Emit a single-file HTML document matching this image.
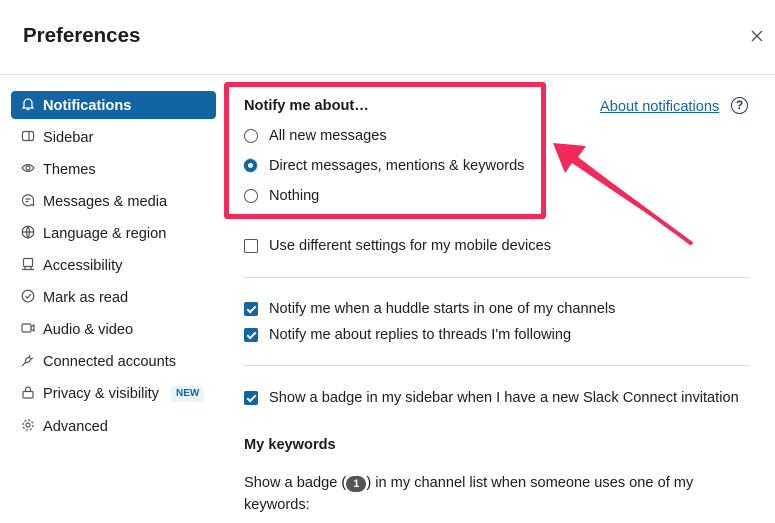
<!DOCTYPE html>
<html><head><style>
body{margin:0;width:775px;height:523px;background:#fff;font-family:"Liberation Sans",sans-serif;color:#1d1c1d;position:relative;overflow:hidden}
.a{position:absolute;white-space:nowrap}
.t{font-size:14.6px;line-height:18px}
.nav{position:absolute;left:11px;width:205px;height:28px;font-size:14.6px;line-height:28px;color:#1d1c1d}
.nav svg{position:absolute;left:10px;top:6px}
.nav span{position:absolute;left:32px;top:1px}
.sel{background:#1264a3;color:#fff;font-weight:bold;border-radius:4px}
.rad{position:absolute;left:244px;width:12px;height:12px;border:1px solid #555;border-radius:50%}
.chk{position:absolute;left:244px;width:12px;height:12px;border:1px solid #555;border-radius:2px}
.chk.on{background:#1264a3;border-color:#1264a3}
.chk.on::after{content:"";position:absolute;left:3.5px;top:0.5px;width:3px;height:7px;border:solid #fff;border-width:0 2px 2px 0;transform:rotate(45deg)}
.hr{position:absolute;left:244px;width:506px;height:1px;background:#ddd}
</style></head><body>
<div class="a" style="left:23px;top:24px;font-size:20.5px;font-weight:bold">Preferences</div>
<svg class="a" style="left:751px;top:30px" width="12" height="12"><path d="M1 1L11 11M11 1L1 11" stroke="#555" stroke-width="1.4"/></svg>
<div class="a" style="left:0;top:74px;width:775px;height:1px;background:#e2e2e2"></div>

<div class="nav sel" style="top:91px"><svg width="14" height="14" viewBox="0 0 14 14" fill="none" stroke="#fff" stroke-width="1.3"><path d="M3 10V6a4 4 0 018 0v4l1 1H2z M5.5 12.5h3"/></svg><span>Notifications</span></div>
<div class="nav" style="top:123px"><svg width="14" height="14" viewBox="0 0 14 14" fill="none" stroke="#555" stroke-width="1.2"><rect x="1.5" y="2.5" width="11" height="9" rx="1.5"/><path d="M8 2.5v9"/></svg><span>Sidebar</span></div>
<div class="nav" style="top:155px"><svg width="14" height="14" viewBox="0 0 14 14" fill="none" stroke="#555" stroke-width="1.2"><path d="M1 7q6-7 12 0q-6 7-12 0z"/><circle cx="7" cy="7" r="2"/></svg><span>Themes</span></div>
<div class="nav" style="top:187px"><svg width="14" height="14" viewBox="0 0 14 14" fill="none" stroke="#555" stroke-width="1.2"><path d="M12.5 12.5l-2-1A5.5 5.5 0 1112.5 7z M4.5 6h5M4.5 8.5h3"/></svg><span>Messages &amp; media</span></div>
<div class="nav" style="top:219px"><svg width="14" height="14" viewBox="0 0 14 14" fill="none" stroke="#555" stroke-width="1.2"><circle cx="7" cy="7" r="5.8"/><path d="M1.2 7h11.6M7 1.2q-3 5.8 0 11.6q3-5.8 0-11.6"/></svg><span>Language &amp; region</span></div>
<div class="nav" style="top:251px"><svg width="14" height="14" viewBox="0 0 14 14" fill="none" stroke="#555" stroke-width="1.2"><rect x="2.5" y="1.5" width="9" height="8" rx="1"/><path d="M1 12.5h12M4 10v2.5M10 10v2.5"/></svg><span>Accessibility</span></div>
<div class="nav" style="top:283px"><svg width="14" height="14" viewBox="0 0 14 14" fill="none" stroke="#555" stroke-width="1.2"><circle cx="7" cy="7" r="5.8"/><path d="M4.5 7l2 2 3.5-4"/></svg><span>Mark as read</span></div>
<div class="nav" style="top:315px"><svg width="14" height="14" viewBox="0 0 14 14" fill="none" stroke="#555" stroke-width="1.2"><rect x="1" y="3" width="9" height="8" rx="1.5"/><path d="M10 6l3-2v6l-3-2"/></svg><span>Audio &amp; video</span></div>
<div class="nav" style="top:347px"><svg width="14" height="14" viewBox="0 0 14 14" fill="none" stroke="#555" stroke-width="1.2"><path d="M1 13l3-3M4 10l1-4 3-2 2 2-2 3-4 1M9 2l-1 2M12 5l-2 1"/></svg><span>Connected accounts</span></div>
<div class="nav" style="top:379px"><svg width="14" height="14" viewBox="0 0 14 14" fill="none" stroke="#555" stroke-width="1.2"><rect x="2" y="6.5" width="10" height="6.5" rx="1"/><path d="M4.5 6.5V4.5a2.5 2.5 0 015 0v2"/></svg><span>Privacy &amp; visibility</span><div class="a" style="left:160px;top:7px;height:16px;padding:0 5px;background:#e8f5fa;color:#1264a3;font-size:10px;font-weight:bold;line-height:16px;border-radius:3px">NEW</div></div>
<div class="nav" style="top:412px"><svg width="14" height="14" viewBox="0 0 14 14" fill="none" stroke="#555" stroke-width="1.2"><circle cx="7" cy="7" r="2"/><circle cx="7" cy="7" r="5" stroke-dasharray="2.2 1.7"/></svg><span>Advanced</span></div>

<div class="a t" style="left:244px;top:97px;font-weight:bold">Notify me about…</div>
<div class="a t" style="left:600px;top:98px;color:#1264a3;text-decoration:underline">About notifications</div>
<div class="a" style="left:731px;top:97px;width:15px;height:15px;border:1.5px solid #1d3a6b;border-radius:50%;font-size:12px;font-weight:bold;text-align:center;line-height:15px;color:#1d3a6b">?</div>
<div class="rad" style="top:129px"></div><div class="a t" style="left:269px;top:127px">All new messages</div>
<div class="rad" style="top:159px;border:4px solid #1264a3;width:5px;height:5px;box-shadow:0 0 0 1px #cfe0f2"></div><div class="a t" style="left:269px;top:157px">Direct messages, mentions &amp; keywords</div>
<div class="rad" style="top:189px"></div><div class="a t" style="left:269px;top:187px">Nothing</div>
<div class="a" style="left:224px;top:82px;width:312px;height:127px;border:5px solid #f2295b;border-radius:3px"></div>
<svg class="a" style="left:0;top:0" width="775" height="523"><path d="M692 244L578 157L586 146L553 143L565 173L572 163Z" fill="#f2295b"/><path d="M692 244L575 158" stroke="#f2295b" stroke-width="4"/></svg>

<div class="chk" style="top:239px"></div><div class="a t" style="left:269px;top:237px">Use different settings for my mobile devices</div>
<div class="hr" style="top:277px"></div>
<div class="chk on" style="top:302px"></div><div class="a t" style="left:269px;top:300px">Notify me when a huddle starts in one of my channels</div>
<div class="chk on" style="top:328px"></div><div class="a t" style="left:269px;top:326px">Notify me about replies to threads I'm following</div>
<div class="hr" style="top:365px"></div>
<div class="chk on" style="top:391px"></div><div class="a t" style="left:269px;top:389px">Show a badge in my sidebar when I have a new Slack Connect invitation</div>
<div class="a t" style="left:244px;top:436px;font-weight:bold">My keywords</div>
<div class="a t" style="left:244px;top:474px">Show a badge (<span style="display:inline-block;background:#555;color:#fff;font-size:11px;font-weight:bold;border-radius:8px;padding:0 7px;line-height:16px">1</span>) in my channel list when someone uses one of my</div>
<div class="a t" style="left:244px;top:496px">keywords:</div>
</body></html>
